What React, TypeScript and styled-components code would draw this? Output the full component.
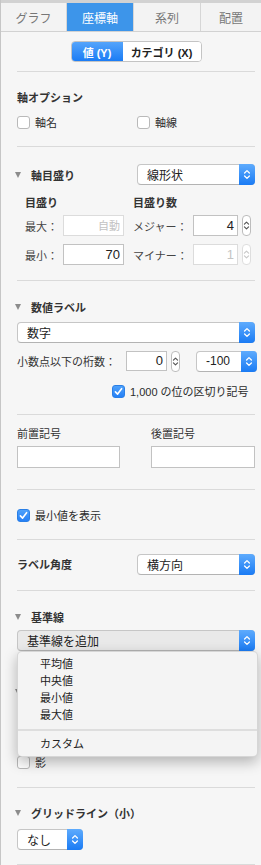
import React from "react";
import styled, { createGlobalStyle } from "styled-components";

const FONT = `"Liberation Sans", "Noto Sans CJK JP", sans-serif`;

const GlobalStyle = createGlobalStyle`
  html, body { margin: 0; padding: 0; background: #f6f6f6; }
  * { box-sizing: border-box; }
  body { font-family: ${FONT}; -webkit-font-smoothing: antialiased; }
`;

const Panel = styled.div`
  width: 261px;
  height: 865px;
  overflow: hidden;
  background: #f6f6f6;
  border-left: 1px solid #c6c6c6;
  font-family: ${FONT};
  font-size: 11px;
  color: #2b2b2b;
`;

const TopStrip = styled.div`
  height: 3px;
  background: #d2d2d2;
`;

const TabBar = styled.div`
  display: grid;
  grid-template-columns: 66px 67px 67px 1fr;
  height: 29px;
  background: #f3f3f3;
  border-bottom: 1px solid #d2d2d2;
`;

const Tab = styled.div<{ $active?: boolean; $last?: boolean }>`
  display: flex;
  align-items: center;
  justify-content: center;
  font-size: 12px;
  color: ${(p) => (p.$active ? "#fff" : "#777")};
  background: ${(p) => (p.$active ? "#3d95ea" : "transparent")};
  border-right: ${(p) => (p.$last ? "none" : "1px solid #d6d6d6")};
`;

const Content = styled.div`
  padding: 0 6px 0 16px;
`;

const SegWrap = styled.div`
  display: flex;
  justify-content: center;
  margin: 9px 0 9px;
`;

const Segmented = styled.div`
  display: flex;
  height: 21px;
  border: 1px solid #c4c4c4;
  border-radius: 4px;
  overflow: hidden;
  background: #fff;
`;

const Segment = styled.div<{ $active?: boolean; $w: number }>`
  width: ${(p) => p.$w}px;
  display: flex;
  align-items: center;
  justify-content: center;
  font-size: 11px;
  font-weight: 700;
  color: ${(p) => (p.$active ? "#fff" : "#222")};
  background: ${(p) =>
    p.$active ? "linear-gradient(#54a4fb, #1b7cf5)" : "#fff"};
`;

const Divider = styled.div`
  height: 1px;
  background: #dadada;
`;

const Section = styled.div<{ $pt: number; $pb: number }>`
  position: relative;
  display: flex;
  flex-direction: column;
  padding-top: ${(p) => p.$pt}px;
  padding-bottom: ${(p) => p.$pb}px;
`;

const Title = styled.div<{ $bold?: boolean; $mt?: number }>`
  height: 16px;
  line-height: 16px;
  font-size: 11px;
  font-weight: ${(p) => (p.$bold ? 700 : 400)};
  color: #333;
  margin-top: ${(p) => p.$mt ?? 0}px;
  white-space: nowrap;
`;

const HeaderRow = styled.div<{ $mt?: number }>`
  display: flex;
  align-items: center;
  justify-content: space-between;
  min-height: 16px;
  margin-top: ${(p) => p.$mt ?? 0}px;
`;

const Disclosure = styled.div`
  display: flex;
  align-items: center;
  height: 16px;
  font-size: 11px;
  font-weight: 700;
  color: #333;
  white-space: nowrap;
`;

const Tri = styled.span`
  width: 0;
  height: 0;
  border-left: 3.5px solid transparent;
  border-right: 3.5px solid transparent;
  border-top: 6px solid #8c8c8c;
  margin-left: -2px;
  margin-right: 10px;
`;

const TwoCol = styled.div<{ $mt?: number; $cols: string }>`
  display: grid;
  grid-template-columns: ${(p) => p.$cols};
  justify-content: space-between;
  align-items: center;
  margin-top: ${(p) => p.$mt ?? 0}px;
`;

const CheckRow = styled.label<{ $indent?: number; $mt?: number }>`
  display: flex;
  align-items: center;
  gap: 5px;
  height: 16px;
  padding-left: ${(p) => p.$indent ?? 0}px;
  margin-top: ${(p) => p.$mt ?? 0}px;
  font-size: 11px;
  color: #2b2b2b;
  white-space: nowrap;
`;

const Box = styled.span<{ $checked?: boolean }>`
  width: 13px;
  height: 13px;
  flex: none;
  border-radius: 3px;
  display: flex;
  align-items: center;
  justify-content: center;
  background: ${(p) => (p.$checked ? "linear-gradient(#4ea1fb, #2580f6)" : "#fff")};
  border: 1px solid ${(p) => (p.$checked ? "#2a7fe6" : "#b9b9b9")};
`;

const SelectBox = styled.div<{ $w?: number; $open?: boolean; $mt?: number; $ml?: number }>`
  display: flex;
  align-items: center;
  height: 21px;
  width: ${(p) => (p.$w ? `${p.$w}px` : "100%")};
  flex: none;
  margin-top: ${(p) => p.$mt ?? 0}px;
  margin-left: ${(p) => p.$ml ?? 0}px;
  background: ${(p) => (p.$open ? "#e9e9e9" : "#fff")};
  border: 1px solid #c6c6c6;
  border-bottom-color: #b3b3b3;
  border-radius: 4px;
  font-size: 12px;
  color: #222;
`;

const SelectValue = styled.span`
  flex: 1;
  padding-left: 9px;
  white-space: nowrap;
  overflow: hidden;
`;

const SelectArrow = styled.span`
  align-self: stretch;
  width: 16px;
  margin: -1px -1px -1px 0;
  border-radius: 0 4px 4px 0;
  background: linear-gradient(#5eabfd, #1a7bf4);
  display: flex;
  align-items: center;
  justify-content: center;
`;

const Anchor = styled.div<{ $mt?: number }>`
  position: relative;
  margin-top: ${(p) => p.$mt ?? 0}px;
  z-index: 5;
`;

const Menu = styled.div`
  position: absolute;
  top: 100%;
  left: 0;
  right: -3px;
  padding: 4px 0 3px;
  background: #f4f4f4;
  border: 1px solid rgba(0, 0, 0, 0.12);
  border-radius: 5px;
  box-shadow: 0 5px 14px rgba(0, 0, 0, 0.28);
`;

const MenuItem = styled.div`
  height: 17px;
  line-height: 17px;
  padding-left: 22px;
  font-size: 11px;
  color: #222;
`;

const MenuSep = styled.div`
  height: 2px;
  margin: 5px 0;
  background: #dedede;
`;

const TickRow = styled.div<{ $mt?: number }>`
  display: grid;
  grid-template-columns: 38px 61px 9px 60px 45px 4px 9px;
  align-items: center;
  padding-left: 8px;
  margin-top: ${(p) => p.$mt ?? 0}px;
`;

const SubHead = styled.div<{ $span: string }>`
  grid-column: ${(p) => p.$span};
  height: 16px;
  line-height: 16px;
  font-weight: 700;
  font-size: 11px;
  color: #333;
`;

const FieldLabel = styled.span<{ $col: number }>`
  grid-column: ${(p) => p.$col};
  font-size: 11px;
  color: #444;
  white-space: nowrap;
`;

const Field = styled.div<{ $w?: number; $h?: number; $disabled?: boolean; $col?: number }>`
  grid-column: ${(p) => p.$col ?? "auto"};
  width: ${(p) => (p.$w ? `${p.$w}px` : "100%")};
  height: ${(p) => p.$h ?? 21}px;
  flex: none;
  background: #fff;
  border: 1px solid ${(p) => (p.$disabled ? "#dcdcdc" : "#c2c2c2")};
  text-align: right;
  padding-right: 3px;
  font-size: 13px;
  line-height: ${(p) => (p.$h ?? 21) - 2}px;
  color: ${(p) => (p.$disabled ? "#c4c4c4" : "#222")};
`;

const Placeholder = styled.span`
  font-size: 11px;
  color: #c2c2c2;
`;

const Stepper = styled.div<{ $disabled?: boolean; $col?: number }>`
  grid-column: ${(p) => p.$col ?? "auto"};
  width: 9px;
  height: 21px;
  flex: none;
  border: 1px solid ${(p) => (p.$disabled ? "#dedede" : "#bdbdbd")};
  border-radius: 4px;
  background: #fff;
  display: flex;
  align-items: center;
  justify-content: center;
`;

const DigitsRow = styled.div<{ $mt?: number }>`
  display: flex;
  align-items: center;
  height: 22px;
  margin-top: ${(p) => p.$mt ?? 0}px;
`;

const DigitsLabel = styled.span`
  width: 109px;
  flex: none;
  font-size: 11px;
  color: #333;
  white-space: nowrap;
`;

const Gap = styled.span<{ $w: number }>`
  width: ${(p) => p.$w}px;
  flex: none;
`;

const HiddenRow = styled.div`
  height: 21px;
  margin-top: 8px;
`;

const Chevrons = ({ color = "#fff" }: { color?: string }) => (
  <svg width="8" height="13" viewBox="0 0 8 13">
    <path
      d="M1.6 5 L4 2.6 L6.4 5 M1.6 8 L4 10.4 L6.4 8"
      stroke={color}
      strokeWidth="1.3"
      fill="none"
      strokeLinecap="round"
      strokeLinejoin="round"
    />
  </svg>
);

const Check = () => (
  <svg width="9" height="9" viewBox="0 0 9 9">
    <path
      d="M1.4 4.9 L3.6 7.1 L7.6 1.7"
      stroke="#fff"
      strokeWidth="1.6"
      fill="none"
      strokeLinecap="round"
      strokeLinejoin="round"
    />
  </svg>
);

const Select = ({
  value,
  w,
  open,
  mt,
  ml,
}: {
  value: string;
  w?: number;
  open?: boolean;
  mt?: number;
  ml?: number;
}) => (
  <SelectBox $w={w} $open={open} $mt={mt} $ml={ml}>
    <SelectValue>{value}</SelectValue>
    <SelectArrow>
      <Chevrons />
    </SelectArrow>
  </SelectBox>
);

const CheckBox = ({
  label,
  checked,
  indent,
  mt,
}: {
  label: string;
  checked?: boolean;
  indent?: number;
  mt?: number;
}) => (
  <CheckRow $indent={indent} $mt={mt}>
    <Box $checked={checked}>{checked && <Check />}</Box>
    {label}
  </CheckRow>
);

export default function App() {
  return (
    <>
      <GlobalStyle />
      <Panel>
        <TopStrip />
        <TabBar>
          <Tab>グラフ</Tab>
          <Tab $active>座標軸</Tab>
          <Tab>系列</Tab>
          <Tab $last>配置</Tab>
        </TabBar>
        <Content>
          <SegWrap>
            <Segmented>
              <Segment $active $w={51}>
                値 (Y)
              </Segment>
              <Segment $w={78}>カテゴリ (X)</Segment>
            </Segmented>
          </SegWrap>
          <Divider />

          <Section $pt={18} $pb={16}>
            <Title $bold>軸オプション</Title>
            <TwoCol $mt={8} $cols="120px 1fr">
              <CheckBox label="軸名" />
              <CheckBox label="軸線" />
            </TwoCol>
          </Section>
          <Divider />

          <Section $pt={17} $pb={15}>
            <HeaderRow>
              <Disclosure>
                <Tri />
                軸目盛り
              </Disclosure>
              <Select value="線形状" w={118} />
            </HeaderRow>
            <TickRow $mt={10}>
              <SubHead $span="1 / 3">目盛り</SubHead>
              <SubHead $span="4 / 8">目盛り数</SubHead>
            </TickRow>
            <TickRow $mt={4}>
              <FieldLabel $col={1}>最大：</FieldLabel>
              <Field $col={2} $disabled>
                <Placeholder>自動</Placeholder>
              </Field>
              <FieldLabel $col={4}>メジャー：</FieldLabel>
              <Field $col={5}>4</Field>
              <Stepper $col={7}>
                <Chevrons color="#555" />
              </Stepper>
            </TickRow>
            <TickRow $mt={8}>
              <FieldLabel $col={1}>最小：</FieldLabel>
              <Field $col={2}>70</Field>
              <FieldLabel $col={4}>マイナー：</FieldLabel>
              <Field $col={5} $disabled>
                1
              </Field>
              <Stepper $col={7} $disabled>
                <Chevrons color="#c8c8c8" />
              </Stepper>
            </TickRow>
          </Section>
          <Divider />

          <Section $pt={18} $pb={15}>
            <Disclosure>
              <Tri />
              数値ラベル
            </Disclosure>
            <Select value="数字" mt={7} />
            <DigitsRow $mt={7}>
              <DigitsLabel>小数点以下の桁数：</DigitsLabel>
              <Field $w={41} $h={20}>
                0
              </Field>
              <Gap $w={4} />
              <Stepper>
                <Chevrons color="#555" />
              </Stepper>
              <Gap $w={16} />
              <Select value="-100" w={61} />
            </DigitsRow>
            <CheckBox label="1,000 の位の区切り記号" checked indent={95} mt={11} />
          </Section>
          <Divider />

          <Section $pt={11} $pb={21}>
            <TwoCol $cols="103px 104px">
              <Title>前置記号</Title>
              <Title>後置記号</Title>
            </TwoCol>
            <TwoCol $mt={4} $cols="103px 104px">
              <Field $h={22} />
              <Field $h={22} />
            </TwoCol>
          </Section>
          <Divider />

          <Section $pt={17} $pb={16}>
            <CheckBox label="最小値を表示" checked />
          </Section>
          <Divider />

          <Section $pt={14} $pb={15}>
            <HeaderRow>
              <Title $bold>ラベル角度</Title>
              <Select value="横方向" w={118} />
            </HeaderRow>
          </Section>
          <Divider />

          <Section $pt={18} $pb={15}>
            <Disclosure>
              <Tri />
              基準線
            </Disclosure>
            <Anchor $mt={5}>
              <Select value="基準線を追加" open />
              <Menu>
                <MenuItem>平均値</MenuItem>
                <MenuItem>中央値</MenuItem>
                <MenuItem>最小値</MenuItem>
                <MenuItem>最大値</MenuItem>
                <MenuSep />
                <MenuItem>カスタム</MenuItem>
              </Menu>
            </Anchor>
          </Section>
          <Divider />

          <Section $pt={17} $pb={17}>
            <Disclosure>
              <Tri />
            </Disclosure>
            <HiddenRow />
            <CheckBox label="影" mt={25} />
          </Section>
          <Divider />

          <Section $pt={17} $pb={14}>
            <Disclosure>
              <Tri />
              グリッドライン（小）
            </Disclosure>
            <Select value="なし" w={66} mt={8} />
          </Section>
          <Divider />
        </Content>
      </Panel>
    </>
  );
}
